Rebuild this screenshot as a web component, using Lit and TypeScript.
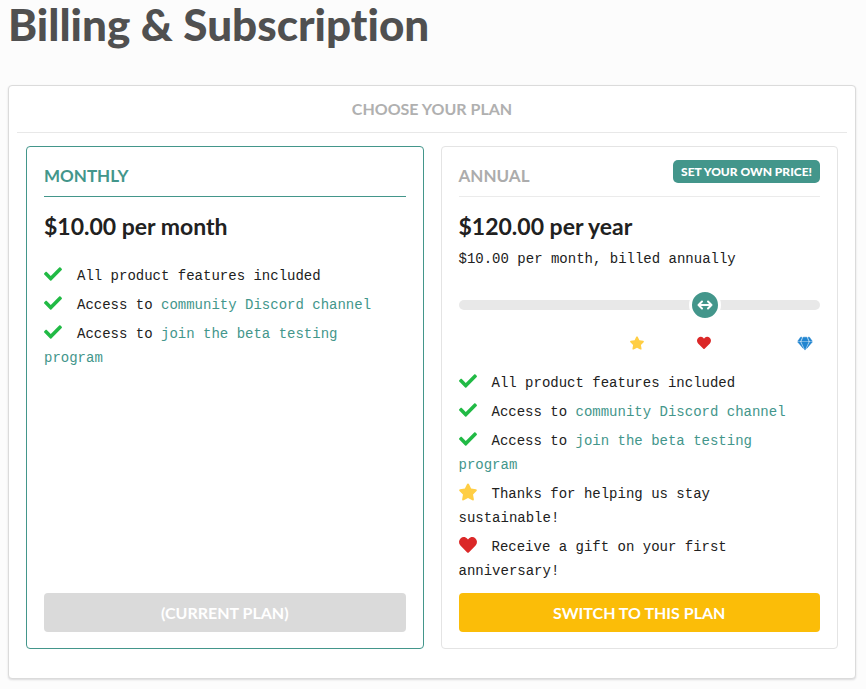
import { LitElement, html, css, svg } from "lit";
import { customElement, property, state } from "lit/decorators.js";

const shapes = {
  check: {
    box: "0 0 512 512",
    art: svg`<path d="M173.898 439.404l-166.4-166.4c-9.997-9.997-9.997-26.206 0-36.204l36.203-36.204c9.997-9.998 26.207-9.998 36.204 0L192 312.69 432.095 72.596c9.997-9.997 26.207-9.997 36.204 0l36.203 36.204c9.997 9.997 9.997 26.206 0 36.204l-294.4 294.401c-9.998 9.997-26.207 9.997-36.204-.001z"/>`,
  },
  star: {
    box: "16 0 544 512",
    art: svg`<path d="M259.3 17.8L194 150.2 47.9 171.5c-26.2 3.8-36.7 36.1-17.7 54.6l105.7 103-25 145.5c-4.5 26.3 23.2 46 46.4 33.7L288 439.6l130.7 68.7c23.2 12.2 50.9-7.4 46.4-33.7l-25-145.5 105.7-103c19-18.5 8.5-50.8-17.7-54.6L382 150.2 316.7 17.8c-11.7-23.6-45.6-23.9-57.4 0z"/>`,
  },
  heart: {
    box: "0 0 512 512",
    art: svg`<path d="M462.3 62.6C407.5 15.9 326 24.3 275.7 76.2L256 96.5l-19.7-20.3C186.1 24.3 104.5 15.9 49.7 62.6c-62.8 53.6-66.1 149.8-9.9 207.9l193.5 199.8c12.5 12.9 32.8 12.9 45.3 0l193.5-199.8c56.3-58.1 53-154.3-9.8-207.9z"/>`,
  },
  gem: {
    box: "10 -10 556 480",
    art: svg`<path stroke="currentColor" stroke-width="20" d="M465.500 0L576 160H474.900L405.700 0h59.800zm-108 0l69.200 160H149.300L218.500 0h139zm-247 0h59.800l-69.200 160H0L110.500 0zM0 192h100.700l123 251.700c1.500 3.100-2.700 5.900-5 3.300L0 192zm148.200 0h279.600l-137 318.200c-1 2.400-4.500 2.400-5.500 0L148.200 192zm204.100 251.700l123-251.700H576L357.300 446.900c-2.300 2.700-6.500-.1-5-3.200z"/>`,
  },
};

type ShapeName = keyof typeof shapes;

@customElement("plan-icon")
class PlanIcon extends LitElement {
  @property() name: ShapeName = "check";

  static styles = css`
    :host {
      display: inline-block;
      width: 18px;
      height: 18px;
    }
    .shape {
      display: block;
      width: 100%;
      height: 100%;
      fill: currentColor;
      overflow: visible;
    }
  `;

  render() {
    const shape = shapes[this.name];
    return html`<svg class="shape" viewBox=${shape.box} aria-hidden="true">${shape.art}</svg>`;
  }
}

@customElement("app-root")
class AppRoot extends LitElement {
  @state() private yearly = 120;

  static styles = css`
    :host {
      display: block;
      box-sizing: border-box;
      min-height: 100vh;
      padding: 0 10px 10px 8px;
      background: #fcfcfc;
      color: #212121;
      font-family: "Liberation Mono", monospace;
      font-size: 14px;
      line-height: 24px;
    }
    .title,
    .heading,
    .name,
    .price,
    .tag,
    .action {
      margin: 0;
      font-family: Lato, sans-serif;
      font-weight: 700;
      font-variant-ligatures: none;
    }
    .title {
      color: #505050;
      font-size: 44px;
      font-weight: 900;
      line-height: 48px;
      padding-bottom: 37px;
    }
    .panel {
      padding: 0 8px 29px;
      border: 1px solid #dbdbdb;
      border-radius: 4px;
      background: #fff;
      box-shadow: 0 1px 2px rgba(34, 36, 38, 0.15);
    }
    .heading {
      padding: 11px 0 12px;
      border-bottom: 1px solid #e8e8e8;
      color: #b0b0b0;
      font-size: 16px;
      line-height: 23px;
      text-align: center;
    }
    .plans {
      display: grid;
      grid-template-columns: 1fr 1fr;
      gap: 17px;
      padding: 13px 9px 0;
    }
    .plan {
      display: flex;
      flex-direction: column;
      padding: 13px 17px 16px;
      border: 1px solid #e4e4e4;
      border-radius: 4px;
    }
    .plan.current {
      border-color: #43968b;
    }
    .top {
      display: flex;
      justify-content: space-between;
      align-items: flex-start;
      height: 36px;
      border-bottom: 1px solid #ebebeb;
      color: #acacac;
    }
    .current .top {
      border-color: #43968b;
      color: #43968b;
    }
    .name {
      padding-top: 4px;
      font-size: 17px;
    }
    .tag {
      padding: 0 8px;
      border-radius: 5px;
      background: #43968b;
      color: #fff;
      font-size: 12px;
      font-weight: 900;
      line-height: 23px;
    }
    .price {
      padding-top: 17px;
      font-size: 23px;
    }
    .features {
      margin: 26px 0 5px;
      padding: 0 8px 0 0;
      list-style: none;
    }
    .features.after {
      margin-top: 21px;
    }
    .feature {
      margin-bottom: 5px;
    }
    .mark {
      margin-right: 15px;
      vertical-align: -3px;
    }
    .check {
      color: #21ba45;
    }
    .star {
      color: #ffce44;
    }
    .heart {
      color: #db2828;
    }
    .gem {
      color: #2185d0;
    }
    .link {
      color: #43968b;
      text-decoration: none;
    }
    .note {
      margin: 0;
      padding-top: 9px;
    }
    .slider {
      display: block;
      width: 100%;
      height: 32px;
      margin: 18px 0 0;
      background: transparent;
      appearance: none;
      cursor: pointer;
    }
    .slider::-webkit-slider-runnable-track {
      height: 10px;
      border-radius: 5px;
      background: #e8e8e8;
    }
    .slider::-webkit-slider-thumb {
      box-sizing: border-box;
      width: 32px;
      height: 32px;
      margin-top: -11px;
      border: 3px solid #fff;
      border-radius: 16px;
      background: #43968b
        url("data:image/svg+xml,%3Csvg xmlns='http://www.w3.org/2000/svg' viewBox='0 0 26 26' fill='none' stroke='white' stroke-width='2' stroke-linecap='round' stroke-linejoin='round'%3E%3Cpath d='M6.5 13h13M10 9.5 6.5 13l3.500 3.500M16 9.500l3.500 3.500-3.500 3.500'/%3E%3C/svg%3E")
        center / 26px 26px no-repeat;
      appearance: none;
    }
    .rewards {
      display: grid;
      grid-template-columns: 171fr 14px 53fr 14px 87fr 14px 8fr;
      padding-top: 15px;
    }
    .reward {
      width: 14px;
      height: 14px;
    }
    .reward.star {
      grid-column: 2;
    }
    .reward.heart {
      grid-column: 4;
    }
    .reward.gem {
      grid-column: 6;
    }
    .action {
      margin-top: auto;
      padding: 0;
      border: 0;
      border-radius: 4px;
      background: #fbbd08;
      color: #fff;
      font-size: 16px;
      line-height: 39px;
      cursor: pointer;
    }
    .action:disabled {
      background: #dadada;
      cursor: default;
    }
  `;

  private onSlide(event: Event) {
    this.yearly = Number((event.target as HTMLInputElement).value);
  }

  private commonFeatures() {
    return html`
      <li class="feature"><plan-icon class="mark check" name="check"></plan-icon>All product features included</li>
      <li class="feature">
        <plan-icon class="mark check" name="check"></plan-icon>Access to
        <a class="link" href="#discord">community Discord channel</a>
      </li>
      <li class="feature">
        <plan-icon class="mark check" name="check"></plan-icon>Access to
        <a class="link" href="#beta">join the beta testing program</a>
      </li>
    `;
  }

  render() {
    return html`
      <h1 class="title">Billing &amp; Subscription</h1>
      <main class="panel">
        <h2 class="heading">CHOOSE YOUR PLAN</h2>
        <div class="plans">
          <section class="plan current">
            <div class="top"><h3 class="name">MONTHLY</h3></div>
            <p class="price">$10.00 per month</p>
            <ul class="features">
              ${this.commonFeatures()}
            </ul>
            <button class="action" type="button" disabled>(CURRENT PLAN)</button>
          </section>
          <section class="plan">
            <div class="top">
              <h3 class="name">ANNUAL</h3>
              <span class="tag">SET YOUR OWN PRICE!</span>
            </div>
            <p class="price">$${this.yearly.toFixed(2)} per year</p>
            <p class="note">$${(this.yearly / 12).toFixed(2)} per month, billed annually</p>
            <input
              class="slider"
              type="range"
              min="36"
              max="156"
              step="12"
              aria-label="Price per year"
              .value=${String(this.yearly)}
              @input=${this.onSlide}
            />
            <div class="rewards">
              <plan-icon class="reward star" name="star"></plan-icon>
              <plan-icon class="reward heart" name="heart"></plan-icon>
              <plan-icon class="reward gem" name="gem"></plan-icon>
            </div>
            <ul class="features after">
              ${this.commonFeatures()}
              <li class="feature">
                <plan-icon class="mark star" name="star"></plan-icon>Thanks for helping us stay sustainable!
              </li>
              <li class="feature">
                <plan-icon class="mark heart" name="heart"></plan-icon>Receive a gift on your first anniversary!
              </li>
            </ul>
            <button class="action" type="button">SWITCH TO THIS PLAN</button>
          </section>
        </div>
      </main>
    `;
  }
}
